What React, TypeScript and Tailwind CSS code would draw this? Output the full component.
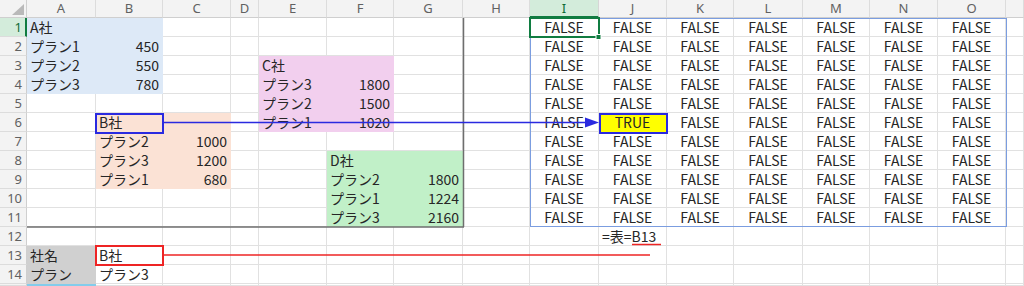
import React from 'react';

const COLS = ['A','B','C','D','E','F','G','H','I','J','K','L','M','N','O','P'];

type Cell = { v: string; align?: 'l' | 'r' | 'c'; fill?: string };

const FILL: Record<string, string> = {
  blue: 'bg-[#dde9f7] border-[#dde9f7]',
  pink: 'bg-[#f2cfee] border-[#f2cfee]',
  peach: 'bg-[#fbe2d5] border-[#fbe2d5]',
  green: 'bg-[#c1f0c8] border-[#c1f0c8]',
  grey: 'bg-[#d0d0d0] border-[#d0d0d0]',
  yellow: 'bg-[#ffff00] border-[#ffff00]',
  sky: 'bg-[#83cceb] border-[#83cceb]',
};

const data: Record<string, Cell> = {};
const put = (k: string, v: string, align: 'l' | 'r' | 'c' = 'l') => {
  data[k] = { ...(data[k] || {}), v, align };
};
const fill = (c1: number, c2: number, r1: number, r2: number, f: string) => {
  for (let c = c1; c <= c2; c++)
    for (let r = r1; r <= r2; r++) {
      const k = COLS[c] + r;
      data[k] = { ...(data[k] || { v: '' }), fill: f };
    }
};

// A block
put('A1', 'A社'); put('A2', 'プラン1'); put('B2', '450', 'r');
put('A3', 'プラン2'); put('B3', '550', 'r'); put('A4', 'プラン3'); put('B4', '780', 'r');
fill(0, 1, 1, 4, 'blue');
// C block
put('E3', 'C社'); put('E4', 'プラン3'); put('F4', '1800', 'r');
put('E5', 'プラン2'); put('F5', '1500', 'r'); put('E6', 'プラン1'); put('F6', '1020', 'r');
fill(4, 5, 3, 6, 'pink');
// B block
put('B6', 'B社'); put('B7', 'プラン2'); put('C7', '1000', 'r');
put('B8', 'プラン3'); put('C8', '1200', 'r'); put('B9', 'プラン1'); put('C9', '680', 'r');
fill(1, 2, 6, 9, 'peach');
// D block
put('F8', 'D社'); put('F9', 'プラン2'); put('G9', '1800', 'r');
put('F10', 'プラン1'); put('G10', '1224', 'r'); put('F11', 'プラン3'); put('G11', '2160', 'r');
fill(5, 6, 8, 11, 'green');
// lookup
put('A13', '社名'); put('B13', 'B社'); put('A14', 'プラン'); put('B14', 'プラン3');
fill(0, 0, 13, 14, 'grey');
fill(0, 0, 15, 15, 'sky');
// FALSE matrix
for (let c = 8; c <= 14; c++)
  for (let r = 1; r <= 11; r++) put(COLS[c] + r, c === 9 && r === 6 ? 'TRUE' : 'FALSE', 'c');
fill(9, 9, 6, 6, 'yellow');
put('J12', '=表=B13', 'l');

const ROWS = Array.from({ length: 15 }, (_, i) => i + 1);

function CellView({ k }: { k: string }) {
  const c = data[k];
  const fillCls = c?.fill ? FILL[c.fill] : 'bg-white border-[#e1e1e1]';
  const align = c?.align === 'r' ? 'justify-end pr-[3px]' : c?.align === 'c' ? 'justify-center' : 'justify-start pl-[3px]';
  return (
    <div className={`flex items-center border-r border-b ${fillCls} ${align} overflow-visible whitespace-nowrap text-[14px] text-[#262626] leading-none`}>
      {c?.v}
    </div>
  );
}

export default function App() {
  return (
    <div className="relative w-[1024px] h-[286px] overflow-hidden bg-white font-['Noto_Sans_CJK_JP',sans-serif]">
      <div className="grid h-full grid-cols-[27px_69px_67px_68px_28px_68px_67px_69px_67px_69px_68px_67px_69px_67px_68px_68px_1fr] grid-rows-[18px_repeat(14,19px)_1fr]">
        {/* corner */}
        <div className="relative bg-[#f3f3f3] border-r border-b border-[#cfcfcf]">
          <svg className="absolute right-[2px] bottom-[2px]" width="12" height="11" viewBox="0 0 12 11">
            <polygon points="12,0 12,11 0,11" fill="#b9b9b9" />
          </svg>
        </div>
        {COLS.map((c) =>
          c === 'I' ? (
            <div key={c} className="flex items-center justify-center bg-[#d3ecdb] border-r border-[#d6d6d6] border-b-2 border-b-[#107c41] text-[13px] leading-none text-[#0e6b36] font-['Noto_Sans',sans-serif]">
              {c}
            </div>
          ) : (
            <div key={c} className="flex items-center justify-center bg-[#f3f3f3] border-r border-[#dcdcdc] border-b border-b-[#cfcfcf] text-[13px] leading-none text-[#616161] font-['Noto_Sans',sans-serif]">
              {c === 'P' ? '' : c}
            </div>
          )
        )}
        {ROWS.map((r) => (
          <React.Fragment key={r}>
            {r === 1 ? (
              <div className="flex items-center justify-end pr-[3px] bg-[#d3ecdb] border-b border-[#dcdcdc] border-r-2 border-r-[#107c41] text-[13px] leading-none text-[#0e6b36] font-['Noto_Sans',sans-serif]">
                {r}
              </div>
            ) : (
              <div className="flex items-center justify-end pr-[4px] bg-[#f3f3f3] border-b border-[#dcdcdc] border-r border-r-[#cfcfcf] text-[13px] leading-none text-[#616161] font-['Noto_Sans',sans-serif]">
                {r === 15 ? '' : r}
              </div>
            )}
            {COLS.map((c) => (
              <CellView key={c + r} k={c + r} />
            ))}
          </React.Fragment>
        ))}
      </div>

      {/* overlays */}
      <svg className="absolute inset-0 pointer-events-none" width="1024" height="286" viewBox="0 0 1024 286">
        <line x1="27" y1="227" x2="464" y2="227" stroke="#6e6e6e" strokeWidth="1.5" />
        <line x1="463.5" y1="18" x2="463.5" y2="227" stroke="#6e6e6e" strokeWidth="1.5" />
        <rect x="530.5" y="18.5" width="476" height="208" fill="none" stroke="#7b9de0" strokeWidth="1" />
        <rect x="530" y="18" width="69" height="19" fill="none" stroke="#107c41" strokeWidth="2" />
        <rect x="596" y="34.5" width="5" height="5" fill="#107c41" stroke="#ffffff" strokeWidth="1" />
        <rect x="96" y="114" width="67" height="19" fill="none" stroke="#2a2ae0" strokeWidth="2" />
        <rect x="600" y="114" width="67" height="19" fill="none" stroke="#2a2ae0" strokeWidth="2" />
        <line x1="163" y1="122.5" x2="587" y2="122.5" stroke="#2a2ae0" strokeWidth="1.6" />
        <polygon points="585,117.5 599,122.5 585,127.5" fill="#2a2ae0" />
        <rect x="96" y="246" width="67" height="19" fill="none" stroke="#ee2424" strokeWidth="2" />
        <line x1="163" y1="255" x2="650" y2="255" stroke="#ee2424" strokeWidth="1.5" />
        <line x1="632" y1="244.5" x2="661" y2="244.5" stroke="#ee2424" strokeWidth="1.5" />
      </svg>
    </div>
  );
}
